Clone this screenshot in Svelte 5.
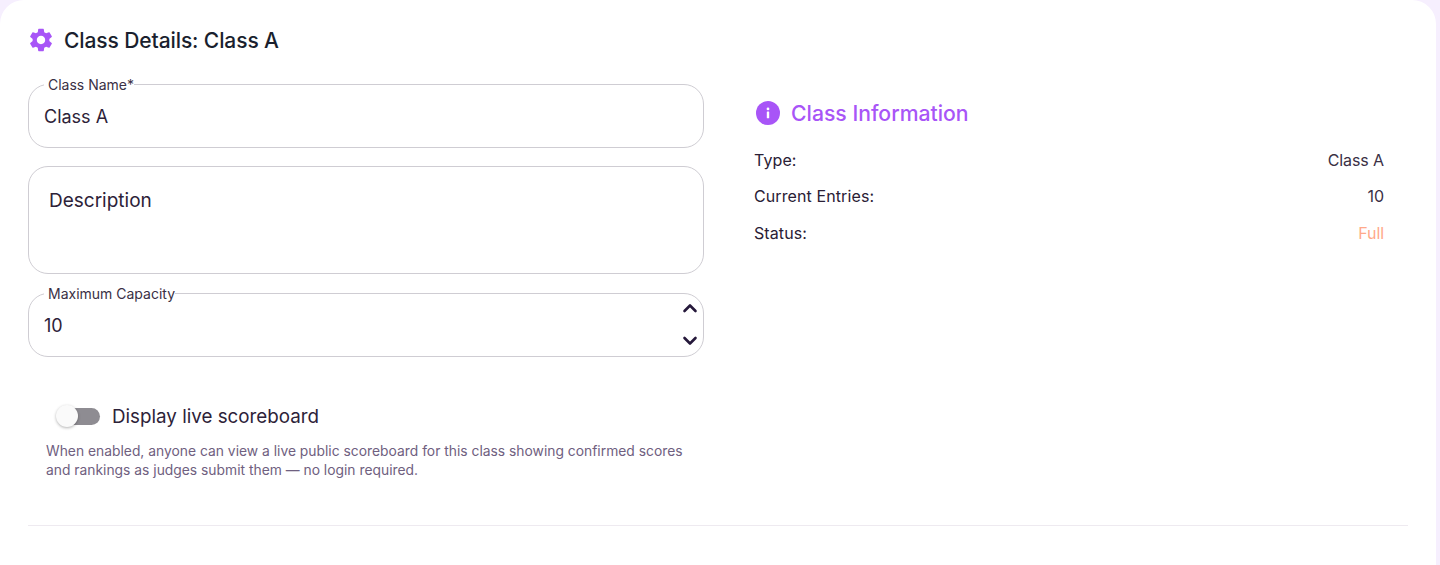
<script>
  const rows = [
    { label: 'Type:', value: 'Class A', status: false },
    { label: 'Current Entries:', value: '10', status: false },
    { label: 'Status:', value: 'Full', status: true }
  ];
</script>

<main class="card">
  <header class="title">
    <svg class="gear" viewBox="0 0 24 24" width="28" height="28" aria-hidden="true">
      <path fill="#a855f7" d="M19.14 12.94c.04-.3.06-.61.06-.94 0-.32-.02-.64-.07-.94l2.03-1.58c.18-.14.23-.41.12-.61l-1.92-3.32c-.12-.22-.37-.29-.59-.22l-2.39.96c-.5-.38-1.03-.7-1.62-.94l-.36-2.54c-.04-.24-.24-.41-.48-.41h-3.84c-.24 0-.43.17-.47.41l-.36 2.54c-.59.24-1.13.57-1.62.94l-2.39-.96c-.22-.08-.47 0-.59.22L2.74 8.87c-.12.21-.08.47.12.61l2.03 1.58c-.05.3-.09.63-.09.94s.02.64.07.94l-2.03 1.58c-.18.14-.23.41-.12.61l1.92 3.32c.12.22.37.29.59.22l2.39-.96c.5.38 1.03.7 1.62.94l.36 2.54c.05.24.24.41.48.41h3.84c.24 0 .44-.17.47-.41l.36-2.54c.59-.24 1.13-.56 1.62-.94l2.39.96c.22.08.47 0 .59-.22l1.92-3.32c.12-.22.07-.47-.12-.61l-2.01-1.58zM12 15.6c-1.98 0-3.6-1.62-3.6-3.6s1.62-3.6 3.6-3.6 3.6 1.62 3.6 3.6-1.62 3.6-3.6 3.6z"/>
    </svg>
    <h1>Class Details: Class A</h1>
  </header>

  <div class="columns">
    <form class="form">
      <fieldset class="field">
        <legend>Class Name*</legend>
        <input type="text" value="Class A" aria-label="Class Name" />
      </fieldset>

      <div class="area">
        <textarea placeholder="Description" aria-label="Description"></textarea>
      </div>

      <fieldset class="field">
        <legend>Maximum Capacity</legend>
        <input type="text" value="10" aria-label="Maximum Capacity" />
        <svg class="chev up" viewBox="0 0 16 10" width="16" height="10" aria-hidden="true"><path d="M2.5 8l5.5-5.5L13.5 8"/></svg>
        <svg class="chev down" viewBox="0 0 16 10" width="16" height="10" aria-hidden="true"><path d="M2.5 2l5.5 5.5L13.5 2"/></svg>
      </fieldset>

      <div class="toggle-row">
        <span class="switch"><span class="track"></span><span class="thumb"></span></span>
        <span class="toggle-label">Display live scoreboard</span>
      </div>
      <p class="help">When enabled, anyone can view a live public scoreboard for this class showing confirmed scores and rankings as judges submit them — no login required.</p>
    </form>

    <aside class="info">
      <div class="info-head">
        <svg viewBox="0 0 24 24" width="24" height="24" aria-hidden="true">
          <circle cx="12" cy="12" r="12" fill="#a855f7"/>
          <rect x="10.8" y="10.6" width="2.4" height="6.6" rx=".5" fill="#fff"/>
          <circle cx="12" cy="7.9" r="1.4" fill="#fff"/>
        </svg>
        <h2>Class Information</h2>
      </div>
      <dl>
        {#each rows as r}
          <div class="row">
            <dt>{r.label}</dt>
            <dd class:status={r.status}>{r.value}</dd>
          </div>
        {/each}
      </dl>
    </aside>
  </div>

  <hr />
</main>

<style>
  :global(body) {
    margin: 0;
    background: #f6effe;
    font-family: Inter, "Noto Sans", "Liberation Sans", sans-serif;
  }
  .card {
    box-sizing: border-box;
    width: 1436px;
    height: 565px;
    background: #fff;
    border-radius: 24px 24px 0 0;
    padding: 24px 28px 0;
    color: #2a2035;
  }
  .title {
    display: flex;
    align-items: center;
    gap: 9px;
    height: 32px;
    margin-left: -1px;
  }
  .gear { flex: none; }
  h1 {
    margin: 0;
    font-size: 21px;
    font-weight: 500;
    color: #1a1f2e;
    letter-spacing: -0.1px;
  }
  .columns {
    display: grid;
    grid-template-columns: 676px 1fr;
    gap: 26px;
    margin-top: 20px;
  }
  .form { display: flex; flex-direction: column; }
  .field {
    position: relative;
    box-sizing: border-box;
    margin: 0;
    padding: 0 15px;
    min-width: 0;
    height: 72px;
    border: 1px solid #cfcdd3;
    border-radius: 20px;
  }
  .field + .area { margin-top: 18px; }
  .area + .field { margin-top: 11px; }
  legend {
    margin-left: 0;
    padding: 1px 0 0 4px;
    font-size: 14px;
    line-height: 15px;
    color: #3a3045;
  }
  input {
    display: block;
    box-sizing: border-box;
    width: 100%;
    height: 48px;
    border: 0;
    outline: 0;
    padding: 0;
    font: inherit;
    font-size: 18px;
    color: #2d2238;
    background: transparent;
  }
  .area {
    box-sizing: border-box;
    height: 108px;
    border: 1px solid #cfcdd3;
    border-radius: 20px;
    padding: 22px 20px 0;
  }
  textarea {
    display: block;
    width: 100%;
    height: 60px;
    box-sizing: border-box;
    border: 0;
    outline: 0;
    padding: 0;
    resize: none;
    font: inherit;
    font-size: 19px;
    line-height: 24px;
    background: transparent;
  }
  textarea::placeholder { color: #2d2238; opacity: 1; }
  .chev {
    position: absolute;
    right: 5px;
    fill: none;
    stroke: #25183a;
    stroke-width: 2.6;
    stroke-linecap: round;
    stroke-linejoin: round;
  }
  .up { top: 2px; }
  .down { top: 35px; }
  .toggle-row {
    display: flex;
    align-items: center;
    gap: 12px;
    margin-top: 46px;
    margin-left: 28px;
    height: 26px;
  }
  .switch {
    position: relative;
    flex: none;
    width: 44px;
    height: 24px;
    display: flex;
    align-items: center;
  }
  .track {
    display: block;
    width: 40px;
    height: 17px;
    margin-left: 4px;
    border-radius: 9px;
    background: #8e8c92;
  }
  .thumb {
    position: absolute;
    left: 0;
    top: 1px;
    width: 22px;
    height: 22px;
    border-radius: 50%;
    background: #fafafa;
    box-shadow: 0 1px 3px rgba(0, 0, 0, .3);
  }
  .toggle-label { font-size: 18.8px; color: #2d2238; }
  .help {
    margin: 13px 0 0 18px;
    font-size: 13.85px;
    line-height: 19px;
    color: #6f6080;
    max-width: 650px;
  }
  .info { padding: 21px 24px 0; }
  .info-head {
    display: flex;
    align-items: center;
    gap: 11px;
    height: 32px;
    margin-left: 2px;
  }
  h2 {
    margin: 0;
    font-size: 21.2px;
    font-weight: 500;
    color: #a855f7;
  }
  dl { margin: 12.6px 0 0; }
  .row {
    display: flex;
    justify-content: space-between;
    align-items: center;
    height: 36.5px;
    font-size: 16px;
    color: #2a2035;
  }
  dt { letter-spacing: 0.1px; }
  dd { margin: 0; color: #3a3045; letter-spacing: -0.1px; }
  dd.status { color: #ffa98a; }
  hr {
    border: 0;
    border-top: 1px solid #eeeaf0;
    margin: 45px 0 0;
  }
</style>
